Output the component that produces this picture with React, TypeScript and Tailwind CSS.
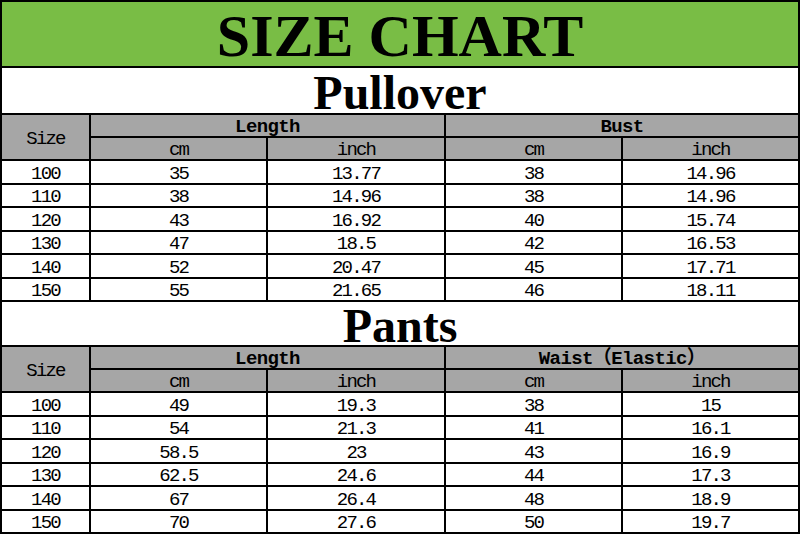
const mono = "font-['Liberation_Mono','Noto_Sans_CJK_SC',monospace]";
const cols = "grid shrink-0 grid-cols-[87px_175px_176px_175px_175px] gap-[2px]";
const rowHeights = ["h-[22px]", "h-[21px]", "h-[22px]", "h-[21px]", "h-[22px]", "h-[21px]"];

type Table = {
  title: string;
  titleHeight: string;
  second: string;
  rows: string[][];
};

const tables: Table[] = [
  {
    title: "Pullover",
    titleHeight: "h-[45px]",
    second: "Bust",
    rows: [
      ["100", "35", "13.77", "38", "14.96"],
      ["110", "38", "14.96", "38", "14.96"],
      ["120", "43", "16.92", "40", "15.74"],
      ["130", "47", "18.5", "42", "16.53"],
      ["140", "52", "20.47", "45", "17.71"],
      ["150", "55", "21.65", "46", "18.11"],
    ],
  },
  {
    title: "Pants",
    titleHeight: "h-[43px]",
    second: "Waist（Elastic）",
    rows: [
      ["100", "49", "19.3", "38", "15"],
      ["110", "54", "21.3", "41", "16.1"],
      ["120", "58.5", "23", "43", "16.9"],
      ["130", "62.5", "24.6", "44", "17.3"],
      ["140", "67", "26.4", "48", "18.9"],
      ["150", "70", "27.6", "50", "19.7"],
    ],
  },
];

function Cell({ children, className = "" }: { children: React.ReactNode; className?: string }) {
  return (
    <div className={`flex items-center justify-center pt-[4px] text-[19px] leading-[13px] text-black ${mono} ${className}`}>
      {children}
    </div>
  );
}

function SizeTable({ t }: { t: Table }) {
  return (
    <>
      <div className={`${t.titleHeight} shrink-0 bg-white flex items-center justify-center pt-[5px]`}>
        <span className="font-['Liberation_Serif',serif] font-bold text-[48px] leading-[36px] text-black">
          {t.title}
        </span>
      </div>
      <div className={`${cols} grid-rows-[21px_21px]`}>
        <Cell className="row-span-2 bg-[#a6a6a6] tracking-[-1.8px]">Size</Cell>
        <Cell className="col-span-2 bg-[#a6a6a6] font-bold tracking-[-0.6px]">Length</Cell>
        <Cell className="col-span-2 bg-[#a6a6a6] font-bold tracking-[-0.6px]">{t.second}</Cell>
        <Cell className="bg-[#a6a6a6] tracking-[-1.8px]">cm</Cell>
        <Cell className="bg-[#a6a6a6] tracking-[-1.8px]">inch</Cell>
        <Cell className="bg-[#a6a6a6] tracking-[-1.8px]">cm</Cell>
        <Cell className="bg-[#a6a6a6] tracking-[-1.8px]">inch</Cell>
      </div>
      {t.rows.map((r, i) => (
        <div key={r[0]} className={`${cols} ${rowHeights[i]}`}>
          {r.map((v, j) => (
            <Cell key={j} className="bg-white tracking-[-1.8px]">
              {v}
            </Cell>
          ))}
        </div>
      ))}
    </>
  );
}

export default function App() {
  return (
    <div className="w-[800px] h-[534px] overflow-hidden bg-black p-[2px] flex flex-col gap-[2px]">
      <div className="h-[64px] shrink-0 bg-[#79bd45] flex items-center justify-center pt-[3px]">
        <h1 className="font-['Liberation_Serif',serif] font-bold text-[60px] leading-none text-black">
          SIZE CHART
        </h1>
      </div>
      {tables.map((t) => (
        <SizeTable key={t.title} t={t} />
      ))}
    </div>
  );
}
